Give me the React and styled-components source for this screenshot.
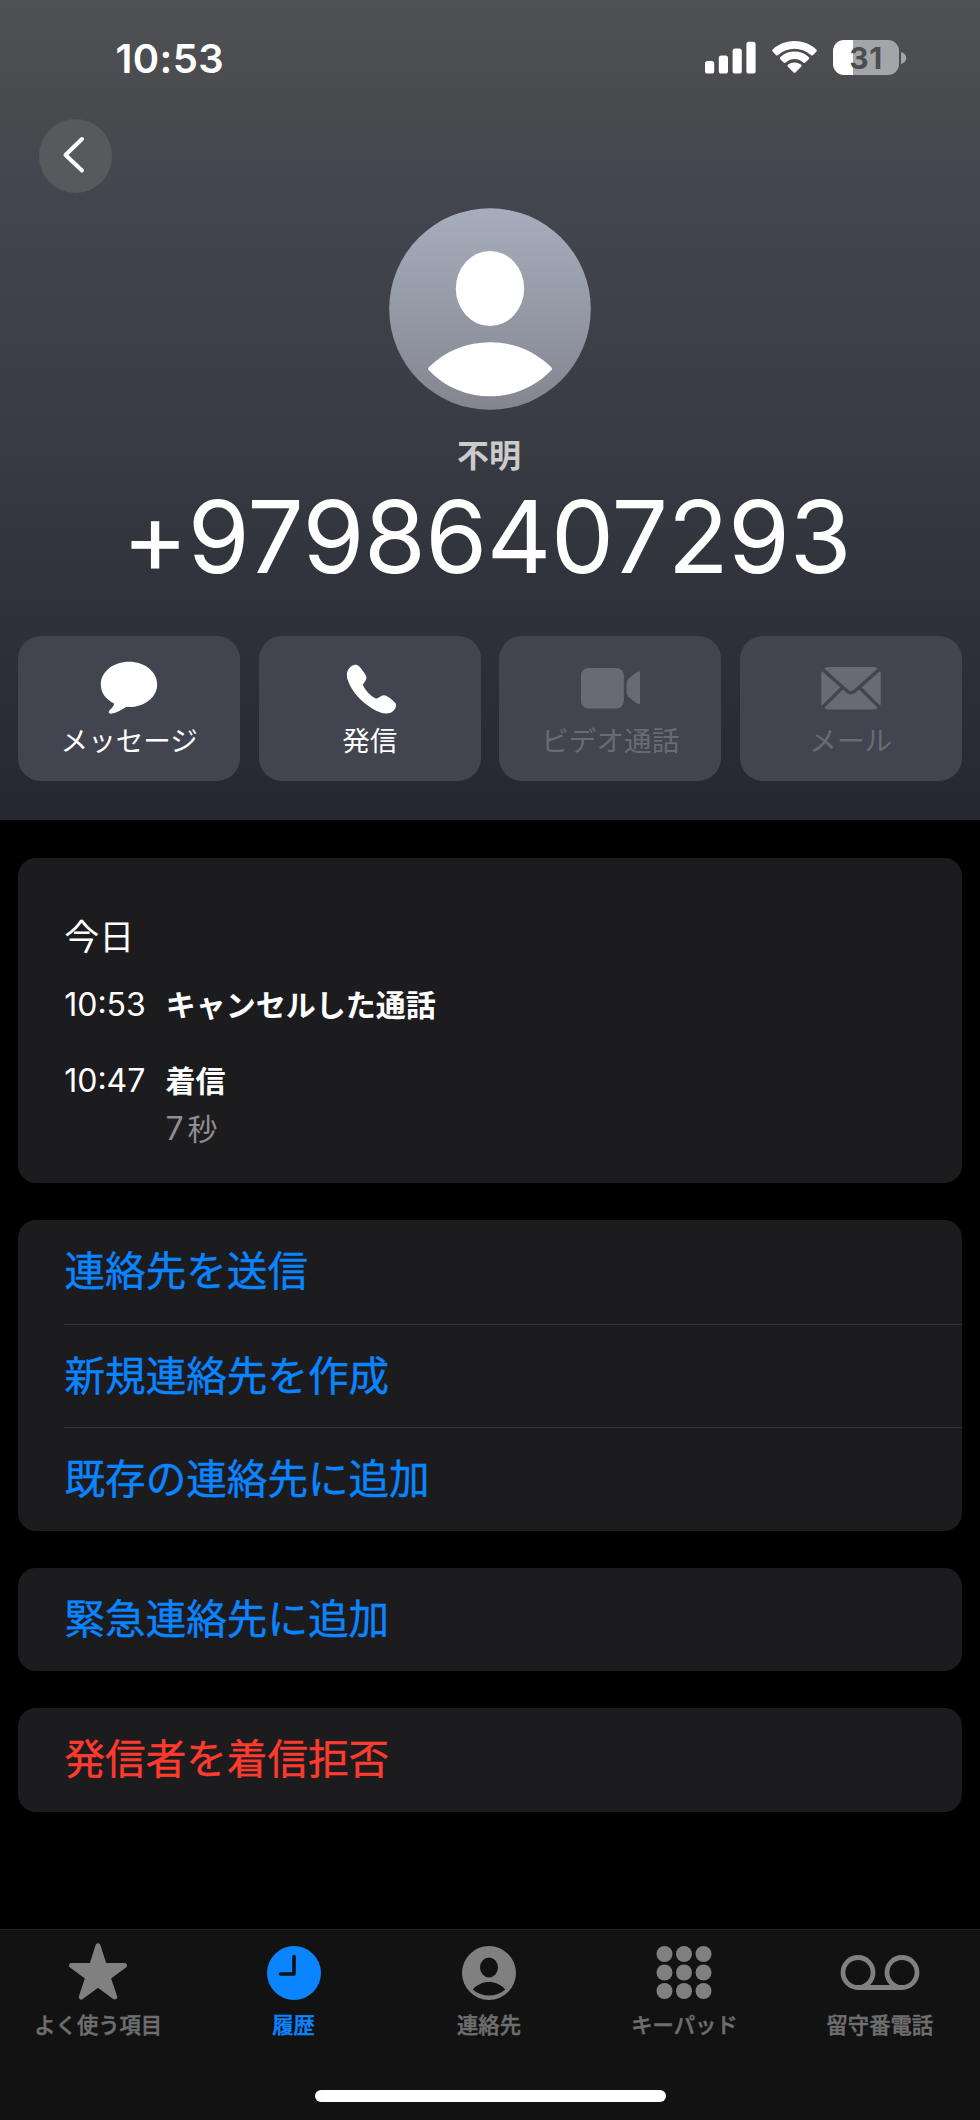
import React from 'react';
import styled, { createGlobalStyle } from 'styled-components';


const GlobalStyle = createGlobalStyle`
  * {
    box-sizing: border-box;
  }
  body {
    margin: 0;
    background: #000;
  }
  button {
    border: 0;
    padding: 0;
    background: none;
    color: inherit;
    font: inherit;
  }
`

const Screen = styled.div`
  display: flex;
  flex-direction: column;
  width: 980px;
  height: 2120px;
  overflow: hidden;
  background: #000;
  color: #fff;
  font-family: Inter, "Noto Sans CJK JP", sans-serif;
  svg {
    display: block;
    flex: none;
  }
`

const Hero = styled.header`
  display: flex;
  flex-direction: column;
  height: 820px;
  background: linear-gradient(#505154 0%, #484a4e 14%, #43464e 23%, #3a3c44 52%, #30323b 74%, #252830 100%);
`

const StatusBar = styled.div`
  display: flex;
  justify-content: space-between;
  height: 119px;
  padding: 40px 73.5px 0 115.5px;
`

const Clock = styled.span`
  height: 38px;
  font-size: 40px;
  font-weight: 600;
  line-height: 38px;
  letter-spacing: 0.4px;
`

const StatusIcons = styled.div`
  display: flex;
  gap: 16px;
  height: 35px;
`

const Battery = styled.div`
  display: flex;
  align-items: center;
  gap: 1.5px;
`

const BatteryBody = styled.div`
  width: 66px;
  height: 35px;
  border-radius: 11px;
  background: linear-gradient(90deg, #fff 31%, #a4a5a8 31%);
  color: #4c4d51;
  font-size: 30px;
  font-weight: 700;
  line-height: 36px;
  letter-spacing: 0.5px;
  text-align: center;
`

const BackButton = styled.button`
  display: flex;
  width: 73.5px;
  height: 73.5px;
  margin-left: 38.5px;
  border-radius: 50%;
  background: #58595d;
`

const Profile = styled.div`
  display: flex;
  flex-direction: column;
  align-items: center;
  padding-top: 15.5px;
  p {
    margin: 25px 0 0;
    padding-right: 2px;
    color: #cbcbce;
    font-size: 32px;
    font-weight: 700;
    line-height: 42px;
  }
  h1 {
    margin: 13px 0 0;
    padding-right: 7px;
    font-size: 100px;
    font-weight: 400;
    line-height: 94px;
    letter-spacing: -0.5px;
    white-space: nowrap;
  }
`

const Actions = styled.div`
  display: grid;
  grid-template-columns: repeat(4, 1fr);
  gap: 18.4px;
  margin-top: 51.5px;
  padding: 0 18.2px;
`

const Action = styled.button`
  display: flex;
  flex-direction: column;
  align-items: center;
  height: 145px;
  padding-top: 20.5px;
  border-radius: 23px;
  background: #42444f;
  color: ${props => props.disabled ? '#696b74' : '#fff'};
  span {
    margin-top: 6.5px;
    font-size: 27.6px;
    line-height: 36px;
    white-space: nowrap;
  }
`

const Content = styled.main`
  display: flex;
  flex: 1;
  flex-direction: column;
  gap: 37px;
  padding: 38px 18.2px 0;
`

const Card = styled.section`
  border-radius: 18px;
  background: #1c1c1e;
`

const History = styled(Card)`
  height: 325px;
  padding: 53px 46px 0;
  h2 {
    margin: 0;
    font-size: 35px;
    font-weight: 400;
    line-height: 52px;
  }
`

const Call = styled.div`
  display: flex;
  gap: ${props => props.gap};
  margin-top: ${props => props.top};
  time {
    font-size: 32px;
    line-height: 40px;
  }
  strong {
    display: block;
    font-size: 30px;
    font-weight: 700;
    line-height: 40px;
  }
  small {
    display: block;
    margin-top: 8px;
    color: #8e8e93;
    font-size: 30px;
    line-height: 40px;
    span {
      margin-right: 4px;
      font-size: 32px;
    }
  }
`

const LinkRow = styled.button`
  display: block;
  width: calc(100% - 46.3px);
  height: 103.6px;
  margin-left: 46.3px;
  color: ${props => props.$danger ? '#ff3b30' : '#0a84ff'};
  font-size: 40.6px;
  line-height: 104.5px;
  text-align: left;
  -webkit-text-stroke: 0.4px;
  & + & {
    border-top: 1.5px solid #333336;
  }
`

const TabBar = styled.nav`
  display: flex;
  flex-direction: column;
  align-items: center;
  height: 191px;
  border-top: 1px solid #242424;
  background: #121212;
`

const Tabs = styled.div`
  display: grid;
  grid-template-columns: repeat(5, 1fr);
  width: 979px;
  height: 160px;
  padding-right: 2px;
`

const Tab = styled.button`
  display: flex;
  flex-direction: column;
  align-items: center;
  padding-top: 11px;
  color: ${props => props.$active ? '#0a84ff' : '#808080'};
  span {
    margin-top: 5.5px;
    color: ${props => props.$active ? '#0a84ff' : '#6e6e6e'};
    font-size: 21.3px;
    font-weight: 500;
    line-height: 32px;
    white-space: nowrap;
    -webkit-text-stroke: 0.5px;
  }
`

const HomeIndicator = styled.div`
  width: 351px;
  height: 12px;
  border-radius: 6px;
  background: #fff;
`


const SignalIcon = () => (
  <svg width="51" height="35" viewBox="0 0 51 35" fill="#fff">
    <rect x="0" y="21" width="9.2" height="12.6" rx="2.6" />
    <rect x="13.8" y="15.5" width="9.2" height="18.1" rx="2.6" />
    <rect x="27.6" y="8.5" width="9.2" height="25.1" rx="2.6" />
    <rect x="41.4" y="1.8" width="9.2" height="31.8" rx="2.6" />
  </svg>
)

const WifiIcon = () => (
  <svg width="45" height="35" viewBox="0 0 45 35" fill="#fff">
    <path d="M.8 11.8Q-.5 10.6.8 9.4C13-1.7 32-1.7 44.2 9.4q1.3 1.2 0 2.4l-3.1 3.1q-1.1 1.1-2.3.1c-9.4-8.3-23.2-8.3-32.6 0q-1.2 1-2.3-.1z" />
    <path d="M8.3 19.2q-1.2-1.1.1-2.3c8-7.3 20.2-7.3 28.2 0q1.3 1.2.1 2.3l-3.1 3.1q-1.1 1.1-2.3.1c-5.4-4.5-12.2-4.5-17.600 0q-1.2 1-2.3-.1z" />
    <path d="M15.900 26.700q-1.200-1.200.2-2.200c3.900-2.700 8.900-2.700 12.800 0q1.400 1 .2 2.200l-5.400 5.500q-1.200 1.200-2.400 0z" />
  </svg>
)

const Avatar = () => (
  <svg width="202" height="202" viewBox="0 0 202 202">
    <defs>
      <linearGradient id="avatar" x1="0" y1="0" x2="0" y2="1">
        <stop offset="0" stopColor="#a6adbc" />
        <stop offset="1" stopColor="#838690" />
      </linearGradient>
    </defs>
    <circle cx="101" cy="101" r="100.8" fill="url(#avatar)" />
    <ellipse cx="101" cy="80.5" rx="34.2" ry="37.5" fill="#fff" />
    <path d="M39.8 162.2q-1.6-1.5 0-3C73 125.8 129 125.8 162.2 159.2q1.6 1.5 0 3C129 197 73 197 39.8 162.2z" fill="#fff" />
  </svg>
)

const MessageIcon = () => (
  <svg width="60" height="60" viewBox="0 0 60 60" fill="currentColor">
    <path d="M30 5.8C45.6 5.8 58.2 15.8 58.2 28.4S45.600 51 30 51q-1.500 0-3 0c-3.800 2.300-9.600 6.200-15 6.700-2.300.2-3-1.500-1.600-3.100 2-2.300 4.400-4.600 4.800-7.200C7 43.600 1.800 36.700 1.800 28.400 1.800 15.800 14.400 5.800 30 5.800z" />
  </svg>
)

const PhoneIcon = () => (
  <svg width="60" height="60" viewBox="0 0 60 60" fill="currentColor">
    <path d="M10 11.500c2.500-2.600 6.500-4 9.300-1 2.300 2.500 4.800 5.800 6.500 8.800 1.100 2 .8 3.900-.5 5.800-1 1.500-2.900 3.200-2 4.900 2.800 5 6.900 9.500 11.900 12.300 2 1.100 4.200-1.300 6-2.300 1.800-.9 3.600-.9 5.300.1 2.800 1.700 5.800 3.800 8.200 6.200 2.700 2.900 1 6.300-1.500 8.700-5.400 5-14.600 1.500-20.700-2.300C20.800 45.400 11.900 36 7.800 24.300 6.200 19.400 6.500 15 10 11.500z" />
  </svg>
)

const VideoIcon = () => (
  <svg width="60" height="60" viewBox="0 0 60 60" fill="currentColor">
    <rect x="1" y="12" width="42.800" height="40.500" rx="7.500" />
    <path d="M47 26.500q0-2 1.600-3.500l7.800-6.400q5.600-3 5.600 2v26.800q0 4.500-5.600 1.700l-7.800-6.500q-1.600-1.400-1.600-3.300z" transform="translate(-.3 0)" />
  </svg>
)

const MailIcon = () => (
  <svg width="60" height="60" viewBox="0 0 60 60" fill="currentColor">
    <path d="M3.300 12.500Q4.500 11 7 11h46q2.500 0 3.700 1.500L32.800 33.700q-2.800 2.800-5.600 0z" />
    <path d="M.3 17q0-1.200.8-1.800l18.200 16L1 49.500q-.7-1-.7-2.300zM59.700 17q0-1.200-.8-1.800l-18.200 16L59 49.500q.7-1 .7-2.300z" />
    <path d="M22 33.600l3.200 2.900q4.800 4 9.600 0l3.200-2.900 18.700 18.100q-1.200 1.800-3.700 1.800H7q-2.500 0-3.700-1.800z" />
  </svg>
)

const StarIcon = () => (
  <svg width="60" height="62" viewBox="0 0 60 62" fill="currentColor" stroke="currentColor" strokeWidth="5" strokeLinejoin="round">
    <path d="M30 4.800L36.300 24.500 56.500 24.500 40.200 36.500 46.700 56 30 43.800 13.300 56 19.800 36.500 3.500 24.500 23.700 24.500z" />
  </svg>
)

const RecentsIcon = () => (
  <svg width="60" height="62" viewBox="0 0 60 62" fill="none">
    <circle cx="30" cy="32" r="27" fill="currentColor" />
    <path d="M30 15.500V33H16.500" stroke="#121212" strokeWidth="3.600" strokeLinecap="round" strokeLinejoin="round" />
  </svg>
)

const ContactIcon = () => (
  <svg width="60" height="62" viewBox="0 0 60 62">
    <circle cx="30" cy="32" r="27" fill="currentColor" />
    <ellipse cx="30" cy="26.500" rx="9" ry="10" fill="#121212" />
    <path d="M13.700 48.500C22 38.400 38 38.400 46.300 48.500 37 56.500 23 56.500 13.700 48.500z" fill="#121212" />
  </svg>
)

const KeypadIcon = () => (
  <svg width="60" height="62" viewBox="0 0 60 62" fill="currentColor">
    {[13, 31.5, 50].map(y => [10.5, 30, 49.5].map(x => (
      <circle key={`${x}-${y}`} cx={x} cy={y} r="8" />
    )))}
  </svg>
)

const VoicemailIcon = () => (
  <svg width="80" height="62" viewBox="0 0 80 62" fill="none" stroke="currentColor" strokeWidth="4.8">
    <circle cx="18" cy="31.5" r="15" />
    <circle cx="62" cy="31.5" r="15" />
    <path d="M18 46.5H62" />
  </svg>
)


const actions = [
  { label: 'メッセージ', icon: <MessageIcon /> },
  { label: '発信', icon: <PhoneIcon /> },
  { label: 'ビデオ通話', icon: <VideoIcon />, disabled: true },
  { label: 'メール', icon: <MailIcon />, disabled: true },
]

const tabs = [
  { label: 'よく使う項目', icon: <StarIcon /> },
  { label: '履歴', icon: <RecentsIcon />, active: true },
  { label: '連絡先', icon: <ContactIcon /> },
  { label: 'キーパッド', icon: <KeypadIcon /> },
  { label: '留守番電話', icon: <VoicemailIcon /> },
]


function App() {

  return (
    <Screen>
      <GlobalStyle />
      <Hero>
        <StatusBar>
          <Clock>10:53</Clock>
          <StatusIcons>
            <SignalIcon />
            <WifiIcon />
            <Battery>
              <BatteryBody>31</BatteryBody>
              <svg width="6" height="12" viewBox="0 0 6 12">
                <path d="M0 0C7 2 7 10 0 12z" fill="#a4a5a8" />
              </svg>
            </Battery>
          </StatusIcons>
        </StatusBar>
        <BackButton aria-label="戻る">
          <svg width="74" height="74" viewBox="0 0 74 74" fill="none">
            <path d="M43 20L26.500 36 43 51.500" stroke="#fff" strokeWidth="4" strokeLinecap="round" strokeLinejoin="round" />
          </svg>
        </BackButton>
        <Profile>
          <Avatar />
          <p>不明</p>
          <h1>+97986407293</h1>
        </Profile>
        <Actions>
          {actions.map(({ label, icon, disabled }) => (
            <Action key={label} disabled={disabled}>
              {icon}
              <span>{label}</span>
            </Action>
          ))}
        </Actions>
      </Hero>

      <Content>
        <History>
          <h2>今日</h2>
          <Call top="22px" gap="20px">
            <time>10:53</time>
            <strong>キャンセルした通話</strong>
          </Call>
          <Call top="36px" gap="20px">
            <time>10:47</time>
            <div>
              <strong>着信</strong>
              <small><span>7</span>秒</small>
            </div>
          </Call>
        </History>
        <Card>
          <LinkRow>連絡先を送信</LinkRow>
          <LinkRow>新規連絡先を作成</LinkRow>
          <LinkRow>既存の連絡先に追加</LinkRow>
        </Card>
        <Card>
          <LinkRow>緊急連絡先に追加</LinkRow>
        </Card>
        <Card>
          <LinkRow $danger>発信者を着信拒否</LinkRow>
        </Card>
      </Content>

      <TabBar>
        <Tabs>
          {tabs.map(({ label, icon, active }) => (
            <Tab key={label} $active={active}>
              {icon}
              <span>{label}</span>
            </Tab>
          ))}
        </Tabs>
        <HomeIndicator />
      </TabBar>
    </Screen>
  )
}

export default App
